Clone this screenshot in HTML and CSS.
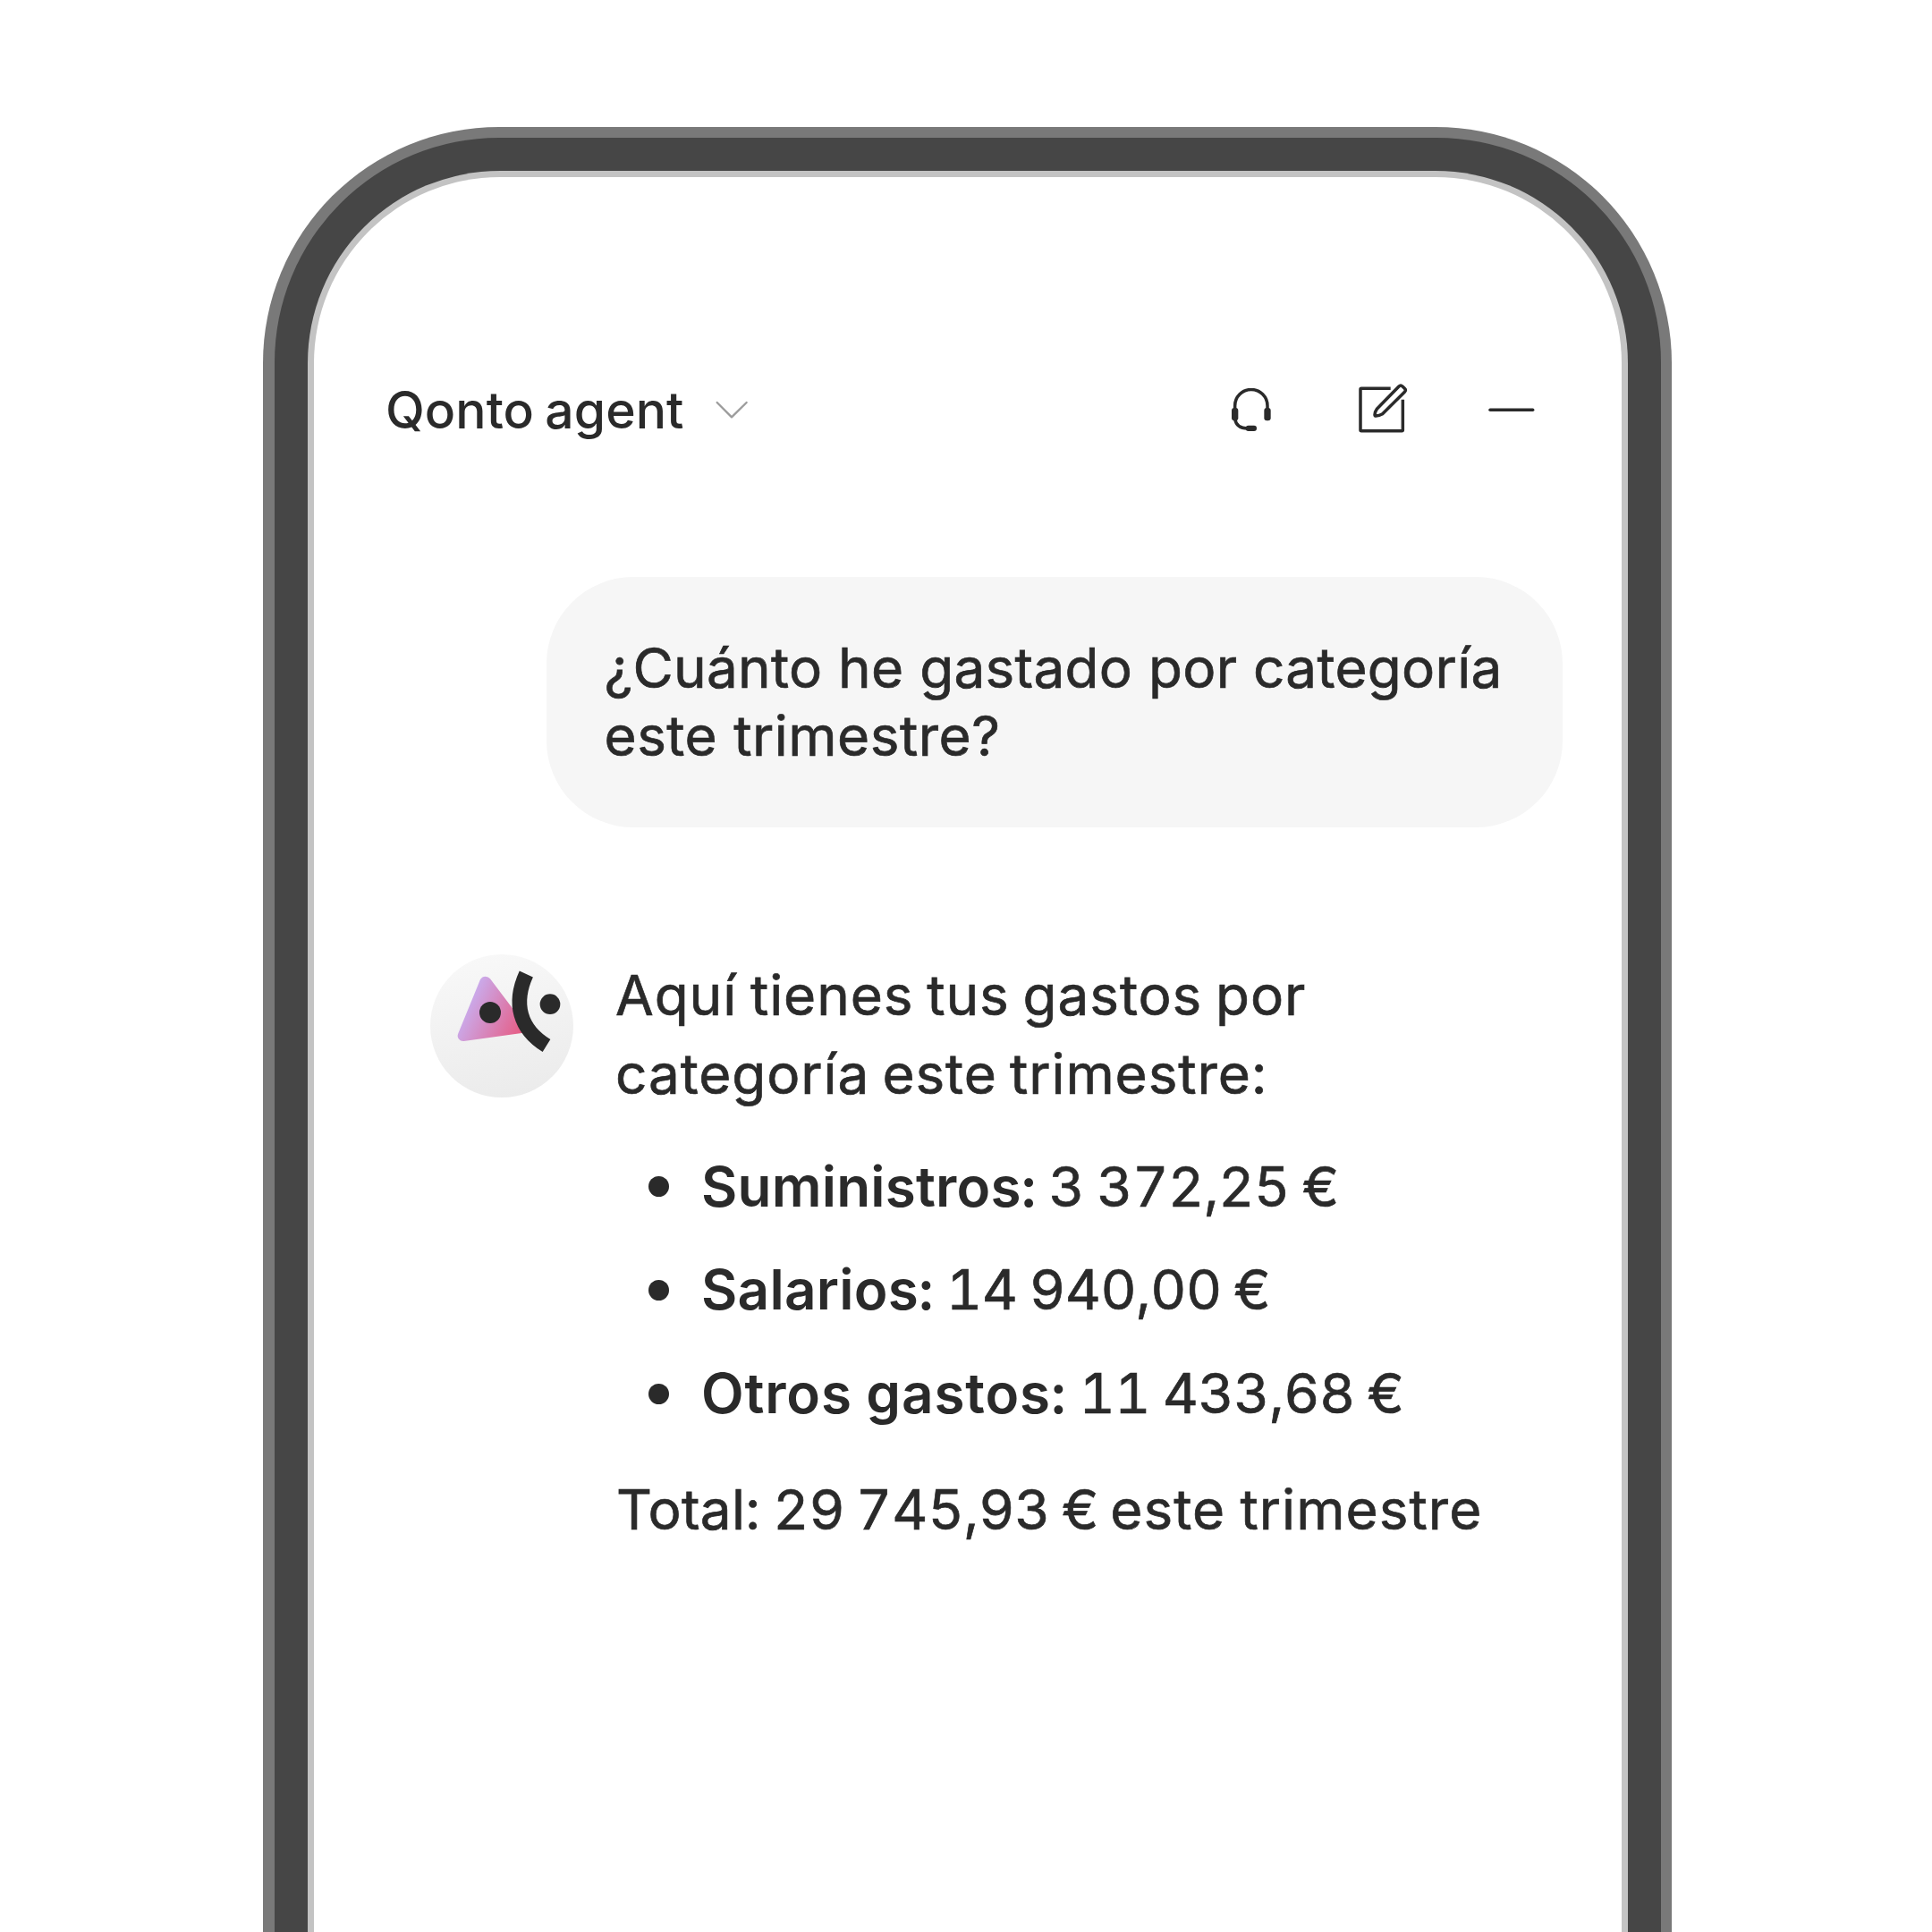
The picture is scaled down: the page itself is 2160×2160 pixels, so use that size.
FILE: index.html
```html
<!DOCTYPE html>
<html lang="es">
<head>
<meta charset="utf-8">
<title>Qonto agent</title>
<link rel="stylesheet" href="styles.css">
</head>
<body>
<main class="stage">
  <div class="phone">
    <div class="phone-bezel">
      <div class="phone-rim">
        <div class="screen">
          <header class="topbar">
            <h1 class="title">Qonto agent</h1>
            <svg class="chevron" viewBox="1134 85 120 120"><path d="M1145 121L1194 170L1244 121"/></svg>
            <div class="actions">
              <svg class="icon-support" viewBox="76 73 144 144">
                <path class="line" d="M93 143V132A54.5 54.5 0 0 1 202 132V143M93 176C96 196 111 208 135 208"/>
                <rect class="fill" x="82" y="139" width="22" height="43" rx="9"/>
                <rect class="fill" x="191" y="139" width="22" height="43" rx="9"/>
                <rect class="fill" x="129" y="198" width="37" height="19" rx="9"/>
              </svg>
              <svg class="icon-compose" viewBox="500 58 174 174">
                <path class="line butt" d="M613 74H515Q512 74 512 77V213Q512 216 515 216H651Q654 216 654 213V111"/>
                <path class="line" d="M567 143L641 67Q647 61 653 67L660 74Q666 80 660 86L586 159Q575 165 564 166Q560 166 560 162Q561 151 567 143Z"/>
              </svg>
              <svg class="icon-minimize" viewBox="938 64 162 162"><path class="line" d="M947 145.500H1090"/></svg>
            </div>
          </header>
          <section class="chat">
            <div class="bubble">
              <p class="q1">¿Cuánto he gastado por categoría</p>
              <p class="q2">este trimestre?</p>
            </div>
            <article class="answer">
              <svg class="avatar" viewBox="33 36 480 480">
                <defs>
                  <linearGradient id="disc" x1="0.4" y1="0" x2="0.6" y2="1"><stop offset="0" stop-color="#f8f8f8"/><stop offset="1" stop-color="#ebebeb"/></linearGradient>
                  <linearGradient id="tri" gradientUnits="userSpaceOnUse" x1="165" y1="205" x2="345" y2="290"><stop offset="0" stop-color="#cba8e8"/><stop offset="1" stop-color="#e65c84"/></linearGradient>
                </defs>
                <circle cx="273" cy="276" r="240" fill="url(#disc)"/>
                <path fill="url(#tri)" d="M201 120Q207 110 218 110Q228 110 234 118L345 265V299L146 327Q135 328 129 320Q122 312 127 301Z"/>
                <circle class="fill" cx="234" cy="231" r="36"/>
                <circle class="fill" cx="435" cy="203" r="34"/>
                <path class="mouth" d="M355 102C310 200 333 287 423 342"/>
              </svg>
              <div class="reply">
                <p class="r1">Aquí tienes tus gastos por</p>
                <p class="r2">categoría este trimestre:</p>
                <ul class="items">
                  <li><b class="k1">Suministros:</b><span class="v1">3 372,25 €</span></li>
                  <li><b class="k2">Salarios:</b><span class="v2">14 940,00 €</span></li>
                  <li><b class="k3">Otros gastos:</b><span class="v3">11 433,68 €</span></li>
                </ul>
                <p class="total"><span class="t1">Total:</span><span class="t2">29 745,93 €</span><span class="t3">este trimestre</span></p>
              </div>
            </article>
          </section>
        </div>
      </div>
    </div>
  </div>
</main>
</body>
</html>
```
FILE: styles.css
```css
* { box-sizing: border-box; }
body { margin: 0; background: #fff; color: #2a2a2a; font-family: Inter, "Liberation Sans", sans-serif; }
h1, p, ul { margin: 0; padding: 0; font-weight: 400; }
p, b, span { white-space: nowrap; }

/* Device frame, cut off by the bottom of the stage */
.stage { height: 2160px; overflow: hidden; padding: 142px 291px 0 294px; }
.phone { padding: 12px 12.5px 0 13px; height: 2500px; border-radius: 264px; background: #797979; }
.phone-bezel { padding: 37px; height: 100%; border-radius: 251px; background: #464646; }
.phone-rim { padding: 7px; height: 100%; border-radius: 215px; background: #c3c3c3; }
.screen { height: 100%; border-radius: 208px; background: #fff; padding-top: 230px; }

/* Header */
.topbar { display: flex; align-items: center; height: 60px; padding: 0 96px 0 80px; }
.title { padding-top: 1px; font-size: 57px; line-height: 60px; font-weight: 500; white-space: nowrap; word-spacing: -3px; letter-spacing: 0.06px; }
.chevron { width: 40px; height: 40px; margin-left: 33px; fill: none; stroke: #9c9c9c; stroke-width: 7; stroke-linecap: round; stroke-linejoin: round; }
.actions { display: flex; align-items: center; margin-left: auto; }
.icon-support { width: 48px; height: 48px; margin-right: 93.5px; }
.icon-compose { width: 58px; height: 58px; margin-right: 88px; }
.icon-minimize { width: 54px; height: 54px; }
.line { fill: none; stroke: #2a2a2a; stroke-width: 10.5; stroke-linecap: round; stroke-linejoin: round; }
.butt { stroke-linecap: butt; }
.fill { fill: #2a2a2a; }

/* Conversation */
.chat { padding: 157px 65.5px 0 130px; font-size: 62px; }
.bubble { width: 1136.5px; height: 280px; margin-left: auto; padding: 63.5px 60px 0 65px; border-radius: 97px; background: #f6f6f6; line-height: 76.5px; }
.bubble p, .reply p, .items span { -webkit-text-stroke: 0.7px #2a2a2a; }
.q1 { letter-spacing: 0.28px; }
.q2 { letter-spacing: 0.5px; }

.answer { display: flex; align-items: flex-start; gap: 47px; margin-top: 142px; }
.avatar { flex: none; width: 160px; height: 160px; }
.mouth { fill: none; stroke: #2a2a2a; stroke-width: 50; }
.reply { padding-top: 1.5px; line-height: 88px; }
.r1 { word-spacing: -3.5px; letter-spacing: 0.92px; }
.r2 { word-spacing: -4px; letter-spacing: 0.9px; }

.items { display: grid; gap: 35.8px; margin: 42px 0 50px; padding-left: 37px; list-style: none; line-height: 80px; font-variant-numeric: tabular-nums; }
.items li { display: flex; align-items: center; }
.items li::before { content: ""; width: 23px; height: 23px; margin-right: 36px; border-radius: 50%; background: #2a2a2a; }
.items b { font-weight: 600; margin-right: 14px; word-spacing: -2px; }
.items span { word-spacing: -2.5px; }
.k1 { letter-spacing: 0.2px; }
.k2 { letter-spacing: 0.25px; }
.k3 { letter-spacing: 0.85px; }
.v1 { letter-spacing: -0.33px; }
.v2 { letter-spacing: -0.5px; }
.v3 { letter-spacing: -0.43px; }

.total { display: flex; padding-left: 1px; line-height: 80px; font-variant-numeric: tabular-nums; }
.t1 { margin-right: 14px; letter-spacing: 0.3px; }
.t2 { margin-right: 13px; word-spacing: -4px; letter-spacing: -0.06px; }
.t3 { word-spacing: -1.5px; letter-spacing: 1.05px; }
```
